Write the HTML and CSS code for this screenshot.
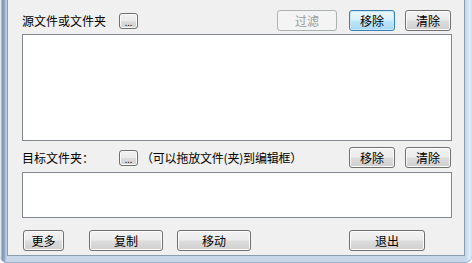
FILE: index.html
```html
<!DOCTYPE html>
<html lang="zh-CN">
<head>
<meta charset="utf-8">
<title>文件</title>
<link rel="stylesheet" href="styles.css">
</head>
<body>
<div class="frame">
  <div class="client">
    <div class="row row-top">
      <span class="label">源文件或文件夹</span>
      <button class="btn dots">...</button>
      <span class="spacer"></span>
      <button class="btn w-filter" disabled>过滤</button>
      <button class="btn btn-focus w-remove">移除</button>
      <button class="btn w-clear">清除</button>
    </div>
    <div class="list list-src"></div>
    <div class="row row-dst">
      <span class="label">目标文件夹：</span>
      <button class="btn dots">...</button>
      <span class="hint">（可以拖放文件(夹)到编辑框）</span>
      <span class="spacer"></span>
      <button class="btn w-remove">移除</button>
      <button class="btn w-clear">清除</button>
    </div>
    <div class="list list-dst"></div>
    <div class="row row-bottom">
      <button class="btn w-more">更多</button>
      <button class="btn w-copy">复制</button>
      <button class="btn w-move">移动</button>
      <span class="spacer"></span>
      <button class="btn w-exit">退出</button>
    </div>
  </div>
</div>
</body>
</html>
```

FILE: styles.css
```css
html, body {
  margin: 0;
  padding: 0;
  width: 472px;
  height: 263px;
  overflow: hidden;
  background: #ffffff;
}

.frame {
  box-sizing: border-box;
  width: 472px;
  height: 263px;
  padding: 0 7px 7px 7px;
  border-radius: 0 0 7px 7px;
  background:
    linear-gradient(to right,
      #dfe8f1 0px, #dfe8f1 1px,
      #7c94b2 2px, #8aa1bd 4px,
      #b9cbe0 6px, #c6d7ea 7px,
      #c6d7ea 465px, #d3e2f3 468px, #e4eef9 470px, #c9daee 472px);
  box-shadow: inset 0 -1px 0 #9fb4cd;
}

.client {
  box-sizing: border-box;
  height: 100%;
  background: #f0f0f0;
  border: 1px solid #8c9bad;
  border-top: none;
  padding: 10px 12px 0 14px;
  display: flex;
  flex-direction: column;
  font-family: "Noto Sans CJK SC", "Noto Sans", sans-serif;
  font-size: 12px;
  color: #000;
}

.row {
  display: flex;
  align-items: center;
  height: 21px;
  padding-right: 1px;
}

.row-dst {
  margin-top: 6px;
}

.row-bottom {
  margin-top: 12px;
  padding-left: 1px;
}

.label {
  width: 97px;
  line-height: 14px;
  white-space: nowrap;
}

.hint {
  margin-left: 3px;
  line-height: 14px;
  white-space: nowrap;
  letter-spacing: -0.2px;
}

.spacer {
  flex: 1;
}

.btn {
  box-sizing: border-box;
  height: 21px;
  padding: 0;
  margin: 0;
  border: 1px solid #707070;
  border-radius: 3px;
  background: linear-gradient(#f2f2f2 0%, #ebebeb 48%, #dddddd 52%, #cfcfcf 100%);
  box-shadow: inset 0 0 0 1px #fbfbfb;
  font-family: "Noto Sans CJK SC", "Noto Sans", sans-serif;
  font-size: 12px;
  line-height: 14px;
  color: #000;
  text-align: center;
}

.btn:disabled {
  border-color: #adb2b5;
  background: #f4f4f4;
  box-shadow: none;
  color: #9a9a9a;
}

.btn-focus {
  border-color: #3c7fb1;
  background: linear-gradient(#eaf6fd 0%, #d9f0fc 48%, #bee6fd 52%, #a7d9f5 100%);
  box-shadow: inset 0 0 0 1px #c8e8f9;
}

.dots {
  width: 19px;
  height: 16px;
  font-size: 9px;
  line-height: 9px;
  letter-spacing: 0;
  padding-top: 4px;
  color: #222;
}

.w-filter { width: 60px; margin-right: 12px; }
.w-remove { width: 46px; margin-right: 10px; }
.w-clear  { width: 46px; }
.w-more   { width: 41px; margin-right: 25px; }
.w-copy   { width: 74px; margin-right: 14px; }
.w-move   { width: 74px; }
.w-exit   { width: 76px; margin-right: 26px; }

.list {
  box-sizing: border-box;
  background: #ffffff;
  border: 1px solid #828790;
}

.list-src {
  margin-top: 3px;
  height: 107px;
}

.list-dst {
  margin-top: 4px;
  height: 46px;
}
```
